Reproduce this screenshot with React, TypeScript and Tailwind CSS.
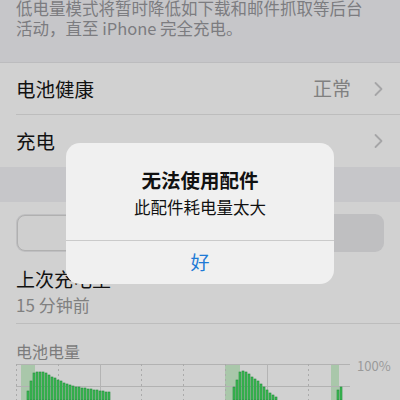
import React from "react"

const font = { fontFamily: '"Noto Sans CJK SC", "Noto Sans", sans-serif' }

// bar x positions (page px) and top y (page px)
const bars: [number, number][] = [
  [27, 392], [30, 382], [33, 374], [36, 373], [39, 373], [42, 373], [45, 374],
  [48, 376], [51, 378], [54, 379], [57, 381], [60, 382], [63, 384], [66, 385],
  [69, 386], [72, 387], [75, 388], [78, 388], [81, 389], [84, 389], [87, 390],
  [90, 390], [93, 391], [96, 391], [99, 392], [102, 392], [105, 393], [108, 393],
  [233, 388], [236, 381], [239, 373], [242, 372], [245, 373], [248, 375],
  [251, 378], [254, 380], [257, 382], [260, 385], [263, 388], [266, 391],
  [269, 394], [272, 396], [275, 398],
  [337, 391], [340, 388],
]

const gridX = [16, 58, 100, 141, 183, 225, 267, 308, 350]

function Chevron() {
  return (
    <svg width="10" height="16" viewBox="0 0 10 16" fill="none">
      <path d="M2.5 2l6 6-6 6" stroke="#a5a5a7" strokeWidth="1.8" strokeLinecap="round" strokeLinejoin="round" />
    </svg>
  )
}

function Chart() {
  return (
    <svg width="334" height="36" viewBox="16 365 334 36" className="block">
      <rect x="21" y="365" width="14" height="40" fill="#a9c7aa" />
      <rect x="225" y="365" width="15" height="40" fill="#a9c7aa" />
      <rect x="331" y="365" width="8" height="40" fill="#a9c7aa" />
      <line x1="16" y1="365.5" x2="350" y2="365.5" stroke="#b2b2b2" />
      <line x1="16" y1="387.5" x2="350" y2="387.5" stroke="#b2b2b2" />
      {gridX.map((x) =>
        x === 100 || x === 267 ? (
          <line key={x} x1={x + 0.5} y1="365" x2={x + 0.5} y2="401" stroke="#b4b4b4" />
        ) : (
          <line key={x} x1={x + 0.5} y1="365" x2={x + 0.5} y2="401" stroke="#aaaaaa" strokeDasharray="2 3" />
        )
      )}
      {bars.map(([x, y]) => (
        <rect key={x} x={x} y={y} width="2" height={401 - y} fill="#3cbc55" stroke="#238b3a" strokeWidth="0.6" />
      ))}
    </svg>
  )
}

export default function App() {
  return (
    <div className="relative w-[400px] h-[400px] overflow-hidden bg-[#c6c6c9]" style={font}>
      {/* low power note */}
      <div className="px-4 pb-[24px] -mt-[2px] text-[16.5px] leading-[20px] text-[#7c7c80]">
        <p>低电量模式将暂时降低如下载和邮件抓取等后台</p>
        <p>活动，直至 iPhone 完全充电。</p>
      </div>

      <div className="border-t border-[#bcbcbe] bg-[#d1d1d1]">
        <div className="flex items-center h-[51px] pl-4 pr-[17px]">
          <span className="flex-1 text-[19.5px] text-[#111]">电池健康</span>
          <span className="text-[19px] text-[#808080] mr-[22px]">正常</span>
          <Chevron />
        </div>
        <div className="ml-4 h-px bg-[#bdbdbd]" />
        <div className="flex items-center h-[52px] pl-4 pr-[17px]">
          <span className="flex-1 text-[19.5px] text-[#111]">充电</span>
          <Chevron />
        </div>
      </div>

      <div className="h-[35px]" />

      <div className="bg-[#d1d1d1] h-[200px]">
        <div className="px-4 pt-3">
          <div className="flex h-[38px] rounded-[9px] bg-[#bfbfc1] p-[1px]">
            <div className="flex-1 rounded-[8px] bg-[#cfcfcf] border border-[#b0b0b0]" />
            <div className="flex-1" />
          </div>
        </div>
        <div className="px-4 mt-[14px]">
          <p className="text-[19px] leading-[26px] text-[#111]">上次充电至</p>
          <p className="text-[17px] leading-[26px] text-[#808080]">15 分钟前</p>
        </div>
        <div className="ml-4 mt-[5px] h-px bg-[#bdbdbd]" />
        <p className="px-4 mt-[16px] text-[16px] leading-[22px] text-[#7c7c7c]">电池电量</p>
        <div className="flex items-start pl-4 mt-[2px]">
          <Chart />
          <span className="ml-[7px] -mt-[8px] text-[13px] text-[#9a9a9a]">100%</span>
        </div>
      </div>

      {/* alert */}
      <div className="absolute left-[66px] top-[143px] w-[268px] rounded-[14px] bg-[#f0f0f0] text-center">
        <div className="pt-[25px] pb-[23px]">
          <p className="text-[19.5px] leading-[24px] font-semibold text-[#111]">无法使用配件</p>
          <p className="mt-[5px] text-[16.5px] leading-[20px] text-[#111]">此配件耗电量太大</p>
        </div>
        <div className="h-px bg-[#cacaca]" />
        <div className="h-[43px] flex items-center justify-center text-[19px] text-[#1f7ad6]">好</div>
      </div>
    </div>
  )
}
